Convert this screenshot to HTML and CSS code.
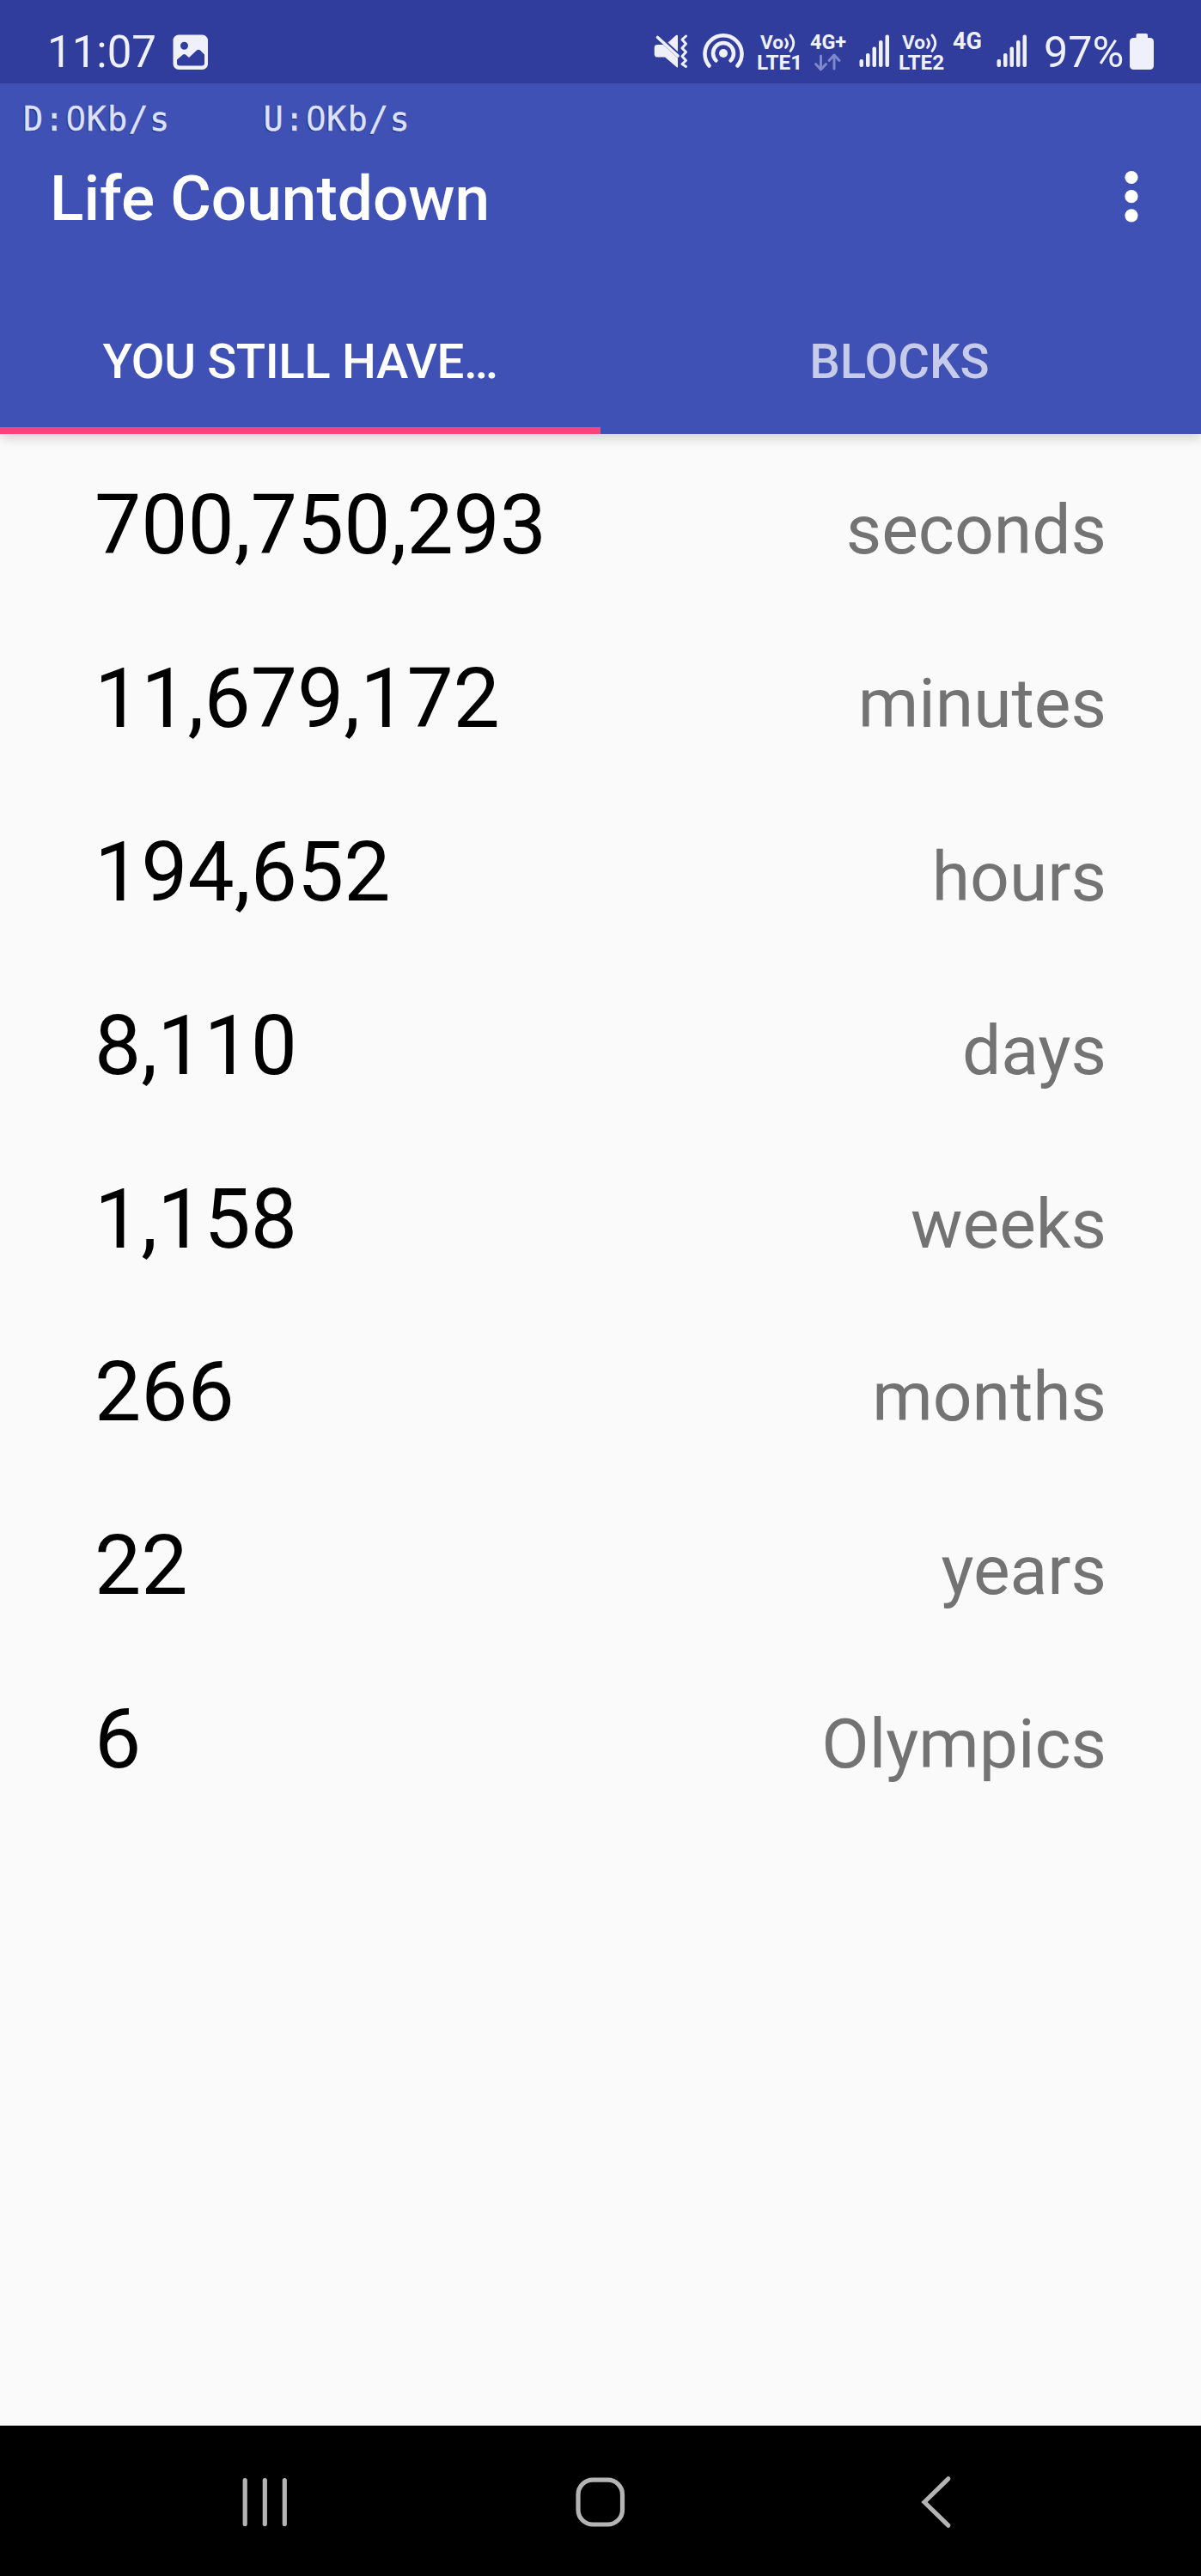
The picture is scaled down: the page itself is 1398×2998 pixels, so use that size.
FILE: index.html
```
<!DOCTYPE html>
<html lang="en">
<head>
    <meta charset="UTF-8">
    <meta name="viewport" content="width=device-width, initial-scale=1.0">
    <title>Life Countdown</title>
    <link rel="stylesheet" href="styles.css">
</head>
<body>
    <!-- System status bar -->
    <div class="status-bar">
        <span class="clock">11:07</span>
        <svg class="icon-picture" width="42" height="97" viewBox="201 0 42 97">
            <path fill="#eff0fb" fill-rule="evenodd" d="M208 40.5h27.500a6.500 6.500 0 0 1 6.500 6.500v27.500a6.500 6.500 0 0 1-6.500 6.500h-27.500a6.500 6.500 0 0 1-6.500-6.500v-27.500a6.500 6.500 0 0 1 6.500-6.500z M214.500 48.700a4.500 4.500 0 1 0 0 9 4.500 4.500 0 1 0 0-9z M206 69.500l7-6q1.500-1.200 3 0l4 3.500 9-8.500q2-1.600 4 0l5 5v10q0 3-3 3h-26q-3 0-3-3z"/>
        </svg>

        <div class="status-right">
            <svg width="40" height="97" viewBox="761 0 40 97">
                <g fill="#eff0fb">
                    <path d="M765 52h7l17 15.500v10.500q-.5 1-1.500 0l-13.500-11.500h-9q-3.300 0-3.300-3.300v-8q0-3.200 3.300-3.200z"/>
                    <path d="M777.500 49.500l9.500-8.500q2-.8 2 1v18z"/>
                </g>
                <path d="M765.500 43.500L789 65" stroke="#eff0fb" stroke-width="3.600" stroke-linecap="round"/>
                <path d="M798.500 42l-4.500 4 4.500 5-4.500 5 4.500 4.500-4.500 5 4.500 5-4.500 4 4.500 3" fill="none" stroke="#eff0fb" stroke-width="3" stroke-linejoin="round" stroke-linecap="round"/>
            </svg>
            <svg class="icon-hotspot" width="48" height="97" viewBox="818 0 48 97">
                <circle cx="842" cy="62" r="5" fill="#eff0fb"/>
                <g fill="none" stroke="#eff0fb" stroke-width="4.500" stroke-linecap="round">
                    <path d="M833.500 70.500a12 12 0 1 1 17 0"/>
                    <path d="M825.500 76.500a21.500 21.500 0 1 1 33 0"/>
                </g>
            </svg>
            <div class="net net-lte1">
                <span class="volte">Vo<svg width="14" height="23" viewBox="0 0 14 23">
                    <g fill="none" stroke="#eff0fb" stroke-width="2.800" stroke-linecap="round">
                        <path d="M2.500 7.500q4 5 0 10"/>
                        <path d="M8 3q7.500 9 0 18.500"/>
                    </g>
                </svg></span>
                <span class="lte">LTE1</span>
            </div>
            <div class="net net-4gplus">
                <span>4G+</span>
                <svg width="42" height="23" viewBox="943 60 42 23">
                    <g fill="none" stroke="#7f88c9" stroke-width="3" stroke-linecap="round" stroke-linejoin="round">
                        <path d="M955.500 64v15.500M949.500 73.500l6 6.500 6-6.500"/>
                        <path d="M971 79V64M965 69.500l6-6.500 6 6.500"/>
                    </g>
                </svg>
            </div>
            <svg class="signal signal-one" width="36" height="97" viewBox="0 0 36 97">
                <g fill="#eff0fb">
                    <rect x="0.500" y="69" width="4.500" height="9" rx="2"/>
                    <rect x="8" y="62" width="4.500" height="16" rx="2"/>
                    <rect x="15.500" y="54.500" width="4.500" height="23.500" rx="2"/>
                    <rect x="23" y="47" width="4.500" height="31" rx="2"/>
                    <rect x="30.500" y="40.500" width="4.500" height="37.500" rx="2"/>
                </g>
            </svg>
            <div class="net net-lte2">
                <span class="volte">Vo<svg width="14" height="23" viewBox="0 0 14 23">
                    <g fill="none" stroke="#eff0fb" stroke-width="2.800" stroke-linecap="round">
                        <path d="M2.500 7.500q4 5 0 10"/>
                        <path d="M8 3q7.500 9 0 18.500"/>
                    </g>
                </svg></span>
                <span class="lte">LTE2</span>
            </div>
            <div class="net net-4g">4G</div>
            <svg class="signal signal-two" width="36" height="97" viewBox="0 0 36 97">
                <g fill="#eff0fb">
                    <rect x="0.500" y="69" width="4.500" height="9" rx="2"/>
                    <rect x="8" y="62" width="4.500" height="16" rx="2"/>
                    <rect x="15.500" y="54.500" width="4.500" height="23.500" rx="2"/>
                    <rect x="23" y="47" width="4.500" height="31" rx="2"/>
                    <rect x="30.500" y="40.500" width="4.500" height="37.500" rx="2"/>
                </g>
            </svg>
            <span class="battery-level">97%</span>
            <svg width="28" height="97" viewBox="1315 0 28 97">
                <rect x="1315" y="44" width="28" height="37" rx="4.500" fill="#eff0fb"/>
                <rect x="1322.500" y="39" width="13.500" height="9" rx="2" fill="#eff0fb"/>
            </svg>
        </div>
    </div>

    <!-- App bar with tabs -->
    <header class="app-bar">
        <div class="net-speed">
            <span>D:<b>0</b>Kb/s</span>
            <span>U:<b>0</b>Kb/s</span>
        </div>
        <div class="toolbar">
            <h1>Life Countdown</h1>
            <svg width="20" height="102" viewBox="1307 180 20 102">
                <g fill="#ffffff">
                    <circle cx="1317" cy="206.500" r="7.600"/>
                    <circle cx="1317" cy="228.700" r="7.600"/>
                    <circle cx="1317" cy="250.800" r="7.600"/>
                </g>
            </svg>
        </div>
        <div class="tabs">
            <div class="tab active">YOU STILL HAVE…</div>
            <div class="tab">BLOCKS</div>
        </div>
    </header>

    <!-- Remaining time -->
    <main class="time-list">
        <div class="time-row"><span class="value">700,750,293</span><span class="unit">seconds</span></div>
        <div class="time-row"><span class="value">11,679,172</span><span class="unit">minutes</span></div>
        <div class="time-row"><span class="value">194,652</span><span class="unit">hours</span></div>
        <div class="time-row"><span class="value">8,110</span><span class="unit">days</span></div>
        <div class="time-row"><span class="value">1,158</span><span class="unit">weeks</span></div>
        <div class="time-row"><span class="value">266</span><span class="unit">months</span></div>
        <div class="time-row"><span class="value">22</span><span class="unit">years</span></div>
        <div class="time-row"><span class="value">6</span><span class="unit">Olympics</span></div>
    </main>

    <!-- System navigation -->
    <nav class="nav-bar">
        <svg width="60" height="64" viewBox="278 2880 60 64">
            <path d="M285.200 2886.500v51M308.300 2886.500v51M331.300 2886.500v51" stroke="#b4b4b4" stroke-width="5.200" stroke-linecap="round"/>
        </svg>
        <svg width="60" height="64" viewBox="669 2880 60 64">
            <rect x="673" y="2886.200" width="51.500" height="51.800" rx="17" fill="none" stroke="#b4b4b4" stroke-width="5.200"/>
        </svg>
        <svg width="60" height="64" viewBox="1060 2880 60 64">
            <path d="M1103.800 2884.800L1076 2912l27.800 27.200" fill="none" stroke="#b4b4b4" stroke-width="5.200" stroke-linecap="round"/>
        </svg>
    </nav>
</body>
</html>
```
FILE: styles.css
```
* {
    box-sizing: border-box;
}
body {
    margin: 0;
    width: 1398px;
    height: 2998px;
    display: flex;
    flex-direction: column;
    font-family: Roboto, sans-serif;
    background-color: #fafafa;
    overflow: hidden;
}
svg {
    display: block;
    flex: none;
}

/* status bar */
.status-bar {
    position: relative;
    z-index: 1;
    display: flex;
    flex: none;
    height: 97px;
    padding: 0 55px;
    background-color: #303d9d;
    color: #eff0fb;
}
.clock {
    padding-top: 24px;
    width: 146px;
    font-size: 51px;
    line-height: 73px;
}
.status-right {
    display: flex;
    margin-left: auto;
}
.icon-hotspot {
    margin-left: 17px;
}
.net {
    display: flex;
    flex-direction: column;
    padding-top: 37.5px;
    font-size: 23.4px;
    font-weight: 700;
    line-height: 23px;
    white-space: nowrap;
}
.volte {
    display: flex;
    padding-left: 4px;
    font-size: 22.5px;
}
.lte {
    font-size: 24.3px;
}
.net-lte1 {
    width: 50px;
    margin-left: 15px;
}
.net-4gplus {
    width: 42px;
    margin-left: 12px;
}
.net-lte2 {
    width: 53px;
    margin-left: 10px;
}
.net-4g {
    width: 34px;
    margin-left: 10px;
    padding-top: 36.5px;
    font-size: 27px;
}
.signal-one {
    margin-left: 15px;
}
.signal-two {
    margin-left: 17px;
}
.battery-level {
    width: 100px;
    margin-left: 19px;
    padding-top: 24px;
    font-size: 50.2px;
    line-height: 73px;
}

/* app bar */
.app-bar {
    position: relative;
    flex: none;
    height: 408px;
    background-color: #3f51b5;
    color: #ffffff;
    box-shadow: 0 4px 14px rgba(0, 0, 0, 0.18);
}
.net-speed {
    display: flex;
    padding-left: 27px;
    height: 83px;
    font-family: "DejaVu Sans Mono", monospace;
    font-size: 38.5px;
    line-height: 83px;
    letter-spacing: 1.3px;
    color: #dde1fa;
    text-shadow: -1px 1px 1px #1f2a66;
    -webkit-text-stroke: 0.4px #dde1fa;
}
.net-speed span {
    width: 279.5px;
}
/* plain zero, the monospace one is dotted */
.net-speed b {
    display: inline-block;
    width: 24.5px;
    font-family: "Noto Sans", sans-serif;
    font-size: 39.5px;
    font-weight: 400;
    line-height: 1;
    text-align: center;
    letter-spacing: 0;
}
.toolbar {
    display: flex;
    justify-content: space-between;
    height: 102px;
    padding: 0 71px 0 58px;
}
.toolbar h1 {
    margin: 0;
    font-size: 73px;
    font-weight: 500;
    line-height: 102px;
}
.tabs {
    display: grid;
    grid-template-columns: 1fr 1fr;
    margin-top: 50px;
}
.tab {
    height: 173px;
    padding: 17px 3px 0 0;
    border-bottom: 8px solid transparent;
    font-size: 56.3px;
    font-weight: 500;
    line-height: 144px;
    text-align: center;
    color: #c5cbe9;
}
.tab.active {
    padding-right: 0;
    letter-spacing: -0.4px;
    color: #ffffff;
    border-bottom-color: #ff4081;
}

/* countdown rows */
.time-list {
    flex: 1;
    padding: 5px 110px 0;
}
.time-row {
    display: flex;
    justify-content: space-between;
    align-items: baseline;
    height: 201.9px;
    line-height: 202px;
}
.value {
    font-size: 96.5px;
    color: #000000;
}
.unit {
    font-size: 80.4px;
    color: #737373;
}

/* navigation bar */
.nav-bar {
    display: grid;
    grid-template-columns: repeat(3, 1fr);
    justify-items: center;
    align-items: center;
    flex: none;
    height: 175px;
    padding: 3px 112px 0;
    background-color: #000000;
}
```
